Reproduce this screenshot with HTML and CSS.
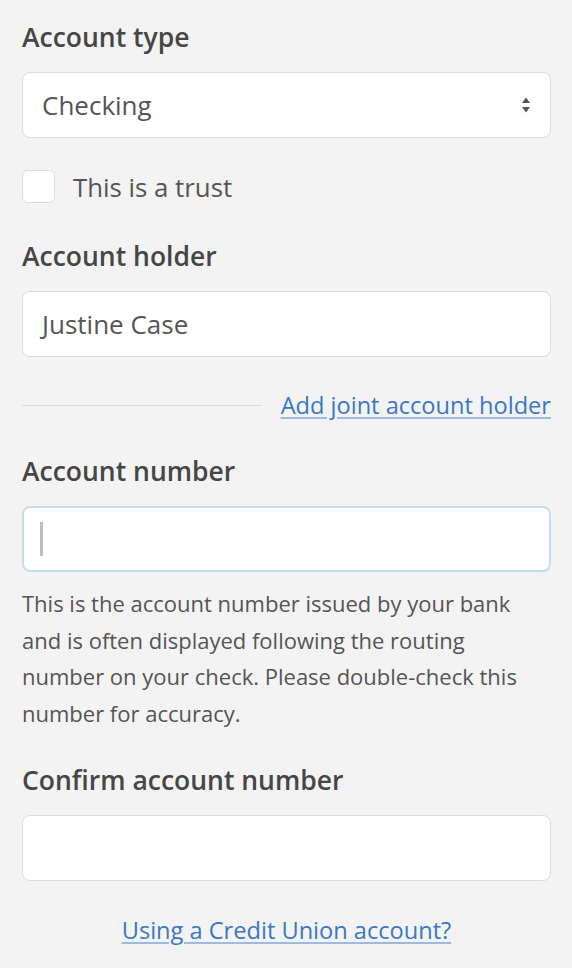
FILE: index.html
```html
<!DOCTYPE html>
<html lang="en">
<head>
<meta charset="utf-8">
<title>Bank account</title>
<link rel="stylesheet" href="styles.css">
</head>
<body>
<form class="form">
  <div class="field">
    <label class="label">Account type</label>
    <div class="control select">
      <span class="value">Checking</span>
      <svg class="arrows" width="10" height="18" viewBox="0 0 10 18"><path d="M5 1.5 L9 7 H1 Z" fill="#555"/><path d="M5 16.5 L9 11 H1 Z" fill="#555"/></svg>
    </div>
  </div>
  <div class="check-row">
    <span class="checkbox"></span>
    <span class="check-label">This is a trust</span>
  </div>
  <div class="field">
    <label class="label">Account holder</label>
    <div class="control"><span class="value">Justine Case</span></div>
  </div>
  <div class="divider-row">
    <span class="rule"></span>
    <a class="link" href="#">Add joint account holder</a>
  </div>
  <div class="field">
    <label class="label">Account number</label>
    <div class="control focused"><span class="caret"></span></div>
    <p class="help">This is the account number issued by your bank<br>and is often displayed following the routing<br>number on your check. Please double-check this<br>number for accuracy.</p>
  </div>
  <div class="field">
    <label class="label">Confirm account number</label>
    <div class="control"></div>
  </div>
  <div class="footer">
    <a class="link" href="#">Using a Credit Union account?</a>
  </div>
</form>
</body>
</html>
```
FILE: styles.css
```css
html, body {
  margin: 0;
  padding: 0;
  background: #f3f3f3;
}
body {
  font-family: "Open Sans", "Noto Sans", "Liberation Sans", sans-serif;
  color: #555;
}
.form {
  padding: 22px 21px 0 22px;
  display: flex;
  flex-direction: column;
}
.label {
  display: block;
  font-size: 26.5px;
  line-height: 30px;
  font-weight: 600;
  color: #464646;
  margin-bottom: 20px;
  white-space: nowrap;
}
.control {
  box-sizing: border-box;
  height: 66px;
  background: #fff;
  border: 1px solid #dcdcdc;
  border-radius: 8px;
  padding: 0 19px 0 19px;
  display: flex;
  align-items: center;
  justify-content: space-between;
}
.value {
  font-size: 26px;
  color: #555;
}
.arrows {
  display: block;
}
.check-row {
  display: flex;
  align-items: center;
  margin-top: 32px;
  height: 33px;
}
.checkbox {
  box-sizing: border-box;
  width: 33px;
  height: 33px;
  background: #fff;
  border: 1px solid #dcdcdc;
  border-radius: 6px;
  margin-right: 18px;
}
.check-label {
  font-size: 25.8px;
  color: #555;
}
.check-row + .field {
  margin-top: 38px;
}
.divider-row {
  display: flex;
  align-items: center;
  margin-top: 33px;
  height: 30px;
}
.rule {
  flex: 1;
  height: 1px;
  background: #dcdcdc;
  margin-right: 19px;
}
.link {
  font-size: 23.6px;
  line-height: 30px;
  color: #3a78c3;
  text-decoration: underline;
  text-decoration-color: #9dbbe0;
  text-underline-offset: 3px;
  white-space: nowrap;
}
.divider-row + .field {
  margin-top: 36px;
}
.focused {
  border: 2px solid #c6daf0;
  padding-left: 16px;
}
.caret {
  width: 3px;
  height: 34px;
  background: #bdbdbd;
}
.help {
  margin: 13px 0 0;
  font-size: 22px;
  line-height: 36.5px;
  color: #555;
  white-space: nowrap;
}
.field + .field {
  margin-top: 34px;
}
.footer {
  margin-top: 34px;
  text-align: center;
}
```
